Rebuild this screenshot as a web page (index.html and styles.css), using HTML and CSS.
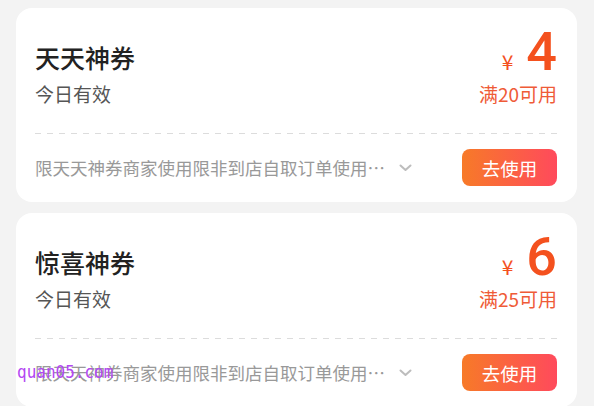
FILE: index.html
```html
<!DOCTYPE html>
<html lang="zh-CN">
<head>
    <meta charset="UTF-8">
    <meta name="viewport" content="width=device-width, initial-scale=1.0">
    <title>神券</title>
    <link rel="stylesheet" href="styles.css">
</head>
<body>
    <div class="list">
        <div class="card">
            <div class="card-top">
                <div class="info">
                    <div class="title">天天神券</div>
                    <div class="valid">今日有效</div>
                </div>
                <div class="price">
                    <div class="amount"><span class="yen">¥</span><span class="num">4</span></div>
                    <div class="limit">满20可用</div>
                </div>
            </div>
            <div class="divider"></div>
            <div class="card-bottom">
                <span class="rule">限天天神券商家使用限非到店自取订单使用，不与其他优惠同享</span>
                <svg class="chevron" width="13" height="8" viewBox="0 0 13 8"><path d="M1.5 1.5 L6.5 6 L11.5 1.5" fill="none" stroke="#bdbdbd" stroke-width="2" stroke-linecap="round" stroke-linejoin="round"/></svg>
                <button class="btn">去使用</button>
            </div>
        </div>

        <div class="card">
            <div class="card-top">
                <div class="info">
                    <div class="title">惊喜神券</div>
                    <div class="valid">今日有效</div>
                </div>
                <div class="price">
                    <div class="amount"><span class="yen">¥</span><span class="num">6</span></div>
                    <div class="limit">满25可用</div>
                </div>
            </div>
            <div class="divider"></div>
            <div class="card-bottom">
                <span class="rule">限天天神券商家使用限非到店自取订单使用，不与其他优惠同享</span>
                <svg class="chevron" width="13" height="8" viewBox="0 0 13 8"><path d="M1.5 1.5 L6.5 6 L11.5 1.5" fill="none" stroke="#bdbdbd" stroke-width="2" stroke-linecap="round" stroke-linejoin="round"/></svg>
                <button class="btn">去使用</button>
            </div>
        </div>
    </div>
    <div class="watermark">quan05.com</div>
</body>
</html>
```

FILE: styles.css
```css
body {
    margin: 0;
    padding: 0;
    background-color: #f3f3f3;
    font-family: 'Noto Sans CJK SC', 'Noto Sans', sans-serif;
    overflow: hidden;
}
.list {
    display: flex;
    flex-direction: column;
    gap: 11px;
    padding: 8px 17px 0 16px;
}
.card {
    background-color: #fff;
    border-radius: 16px;
    padding: 0 20px 16px 19px;
}
.card-top {
    display: flex;
    justify-content: space-between;
    align-items: flex-end;
    height: 68px;
    padding-top: 31px;
}
.title {
    height: 34px;
    font-size: 25px;
    line-height: 34px;
    color: #222;
    font-weight: 500;
}
.valid {
    height: 26px;
    margin-top: 7px;
    font-size: 19px;
    line-height: 26px;
    color: #555;
}
.price {
    display: flex;
    flex-direction: column;
    align-items: flex-end;
    color: #f4511e;
}
.amount {
    display: flex;
    align-items: baseline;
    height: 40px;
    line-height: 40px;
    margin-bottom: 9px;
}
.yen {
    font-size: 21px;
    line-height: 40px;
    margin-right: 13px;
}
.num {
    font-family: Roboto, sans-serif;
    font-size: 54px;
    line-height: 40px;
    font-weight: 500;
}
.limit {
    height: 26px;
    font-size: 19px;
    line-height: 26px;
    color: #ef5b37;
}
.divider {
    height: 1px;
    margin-top: 26px;
    background-image: repeating-linear-gradient(to right, #dcdcdc 0 6px, transparent 6px 12px);
}
.card-bottom {
    display: flex;
    align-items: center;
    height: 37px;
    padding-top: 15px;
}
.rule {
    max-width: 350px;
    font-size: 17.5px;
    line-height: 24px;
    color: #999;
    white-space: nowrap;
    overflow: hidden;
    text-overflow: ellipsis;
}
.chevron {
    margin-left: 14px;
}
.btn {
    margin-left: auto;
    width: 95px;
    height: 37px;
    border: none;
    border-radius: 8px;
    background: linear-gradient(to right, #f77a28, #ff4a5c);
    color: #fff;
    font-family: 'Noto Sans CJK SC', sans-serif;
    font-size: 18.5px;
    padding: 0;
}
.watermark {
    position: absolute;
    left: 17px;
    top: 362px;
    font-family: 'DejaVu Sans Mono', monospace;
    font-size: 16px;
    color: #b347f2;
    transform: scaleY(1.15);
}
```
